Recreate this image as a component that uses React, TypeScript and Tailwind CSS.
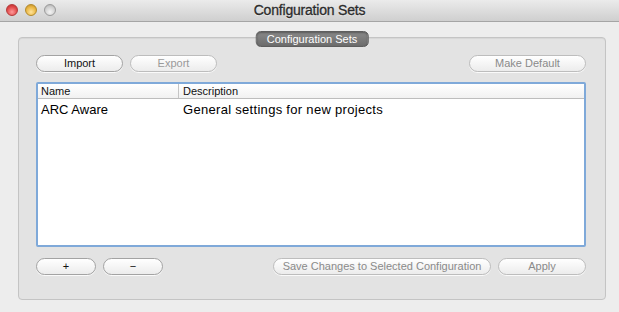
export default function App() {
  const btn =
    "h-[17px] rounded-full border border-[#a3a3a3] bg-gradient-to-b from-white to-[#ececec] text-[11px] leading-[15px] shadow-[0_1px_0_rgba(255,255,255,0.8)] flex items-center justify-center";
  return (
    <div
      className="w-[619px] h-[312px] bg-[#ededed] flex flex-col overflow-hidden"
      style={{ fontFamily: '"Liberation Sans", Arial, sans-serif' }}
    >
      {/* Title bar */}
      <div className="h-[22px] shrink-0 relative flex items-center justify-center bg-gradient-to-b from-[#ebebeb] to-[#cfcfcf] border-b border-[#a5a5a5]">
        <div className="absolute left-[6px] top-[4px] flex gap-[7px]">
          <span className="w-[12px] h-[12px] rounded-full border border-[#b33a3a] bg-[radial-gradient(circle_at_50%_70%,#ff9a9a,#e04848_60%,#b52a2a)]" />
          <span className="w-[12px] h-[12px] rounded-full border border-[#b38a2a] bg-[radial-gradient(circle_at_50%_70%,#ffe39a,#e8b440_60%,#b8862a)]" />
          <span className="w-[12px] h-[12px] rounded-full border border-[#9a9a9a] bg-[radial-gradient(circle_at_50%_70%,#f4f4f4,#cfcfcf_60%,#a8a8a8)]" />
        </div>
        <span className="text-[14px] text-[#2b2b2b] tracking-[-0.2px] [text-shadow:0_1px_0_rgba(255,255,255,0.6)] [-webkit-text-stroke:0.3px_#2b2b2b]">
          Configuration Sets
        </span>
      </div>

      {/* Content */}
      <div className="flex-1 pt-[15px] pl-[18px] pr-[13px] pb-[13px]">
        <div className="relative h-full rounded-[4px] border border-[#c4c4c4] bg-[#e3e3e3] shadow-[inset_0_1px_1px_rgba(0,0,0,0.06)] pt-[17px] pl-[17px] pr-[19px] pb-[24px] flex flex-col">
          <div className="absolute left-1/2 -translate-x-1/2 top-[-7px] h-[16px] px-[10px] rounded-[5px] bg-gradient-to-b from-[#8a8a8a] to-[#6c6c6c] border border-[#5e5e5e] text-white text-[11px] flex items-center shadow-[inset_0_1px_2px_rgba(0,0,0,0.35)]">
            Configuration Sets
          </div>

          <div className="flex gap-[7px]">
            <div className={`${btn} w-[87px] text-[#111]`}>Import</div>
            <div className={`${btn} w-[87px] text-[#9a9a9a] border-[#bdbdbd]`}>Export</div>
            <div className={`${btn} w-[117px] ml-auto text-[#8a8a8a] border-[#bdbdbd]`}>Make Default</div>
          </div>

          <div className="mt-[10px] h-[165px] rounded-[2px] border-[2px] border-[#7fa9d9] bg-white flex flex-col">
            <div className="h-[15px] flex border-b border-[#bdbdbd] bg-gradient-to-b from-white to-[#f1f1f1] text-[11px] text-[#111] leading-[14px]">
              <div className="w-[141px] pl-[3px] border-r border-[#c5c5c5]">Name</div>
              <div className="pl-[4px]">Description</div>
            </div>
            <div className="flex h-[22px] items-center text-[13px] text-black">
              <div className="w-[142px] pl-[3px]">ARC Aware</div>
              <div className="pl-[3px] tracking-[0.3px]">General settings for new projects</div>
            </div>
          </div>

          <div className="mt-[11px] flex gap-[7px]">
            <div className={`${btn} w-[60px] text-[#111]`}>+</div>
            <div className={`${btn} w-[60px] text-[#111]`}>−</div>
            <div className={`${btn} w-[218px] ml-auto text-[#8a8a8a] border-[#bdbdbd]`}>
              Save Changes to Selected Configuration
            </div>
            <div className={`${btn} w-[88px] text-[#8a8a8a] border-[#bdbdbd]`}>Apply</div>
          </div>
        </div>
      </div>
    </div>
  );
}
